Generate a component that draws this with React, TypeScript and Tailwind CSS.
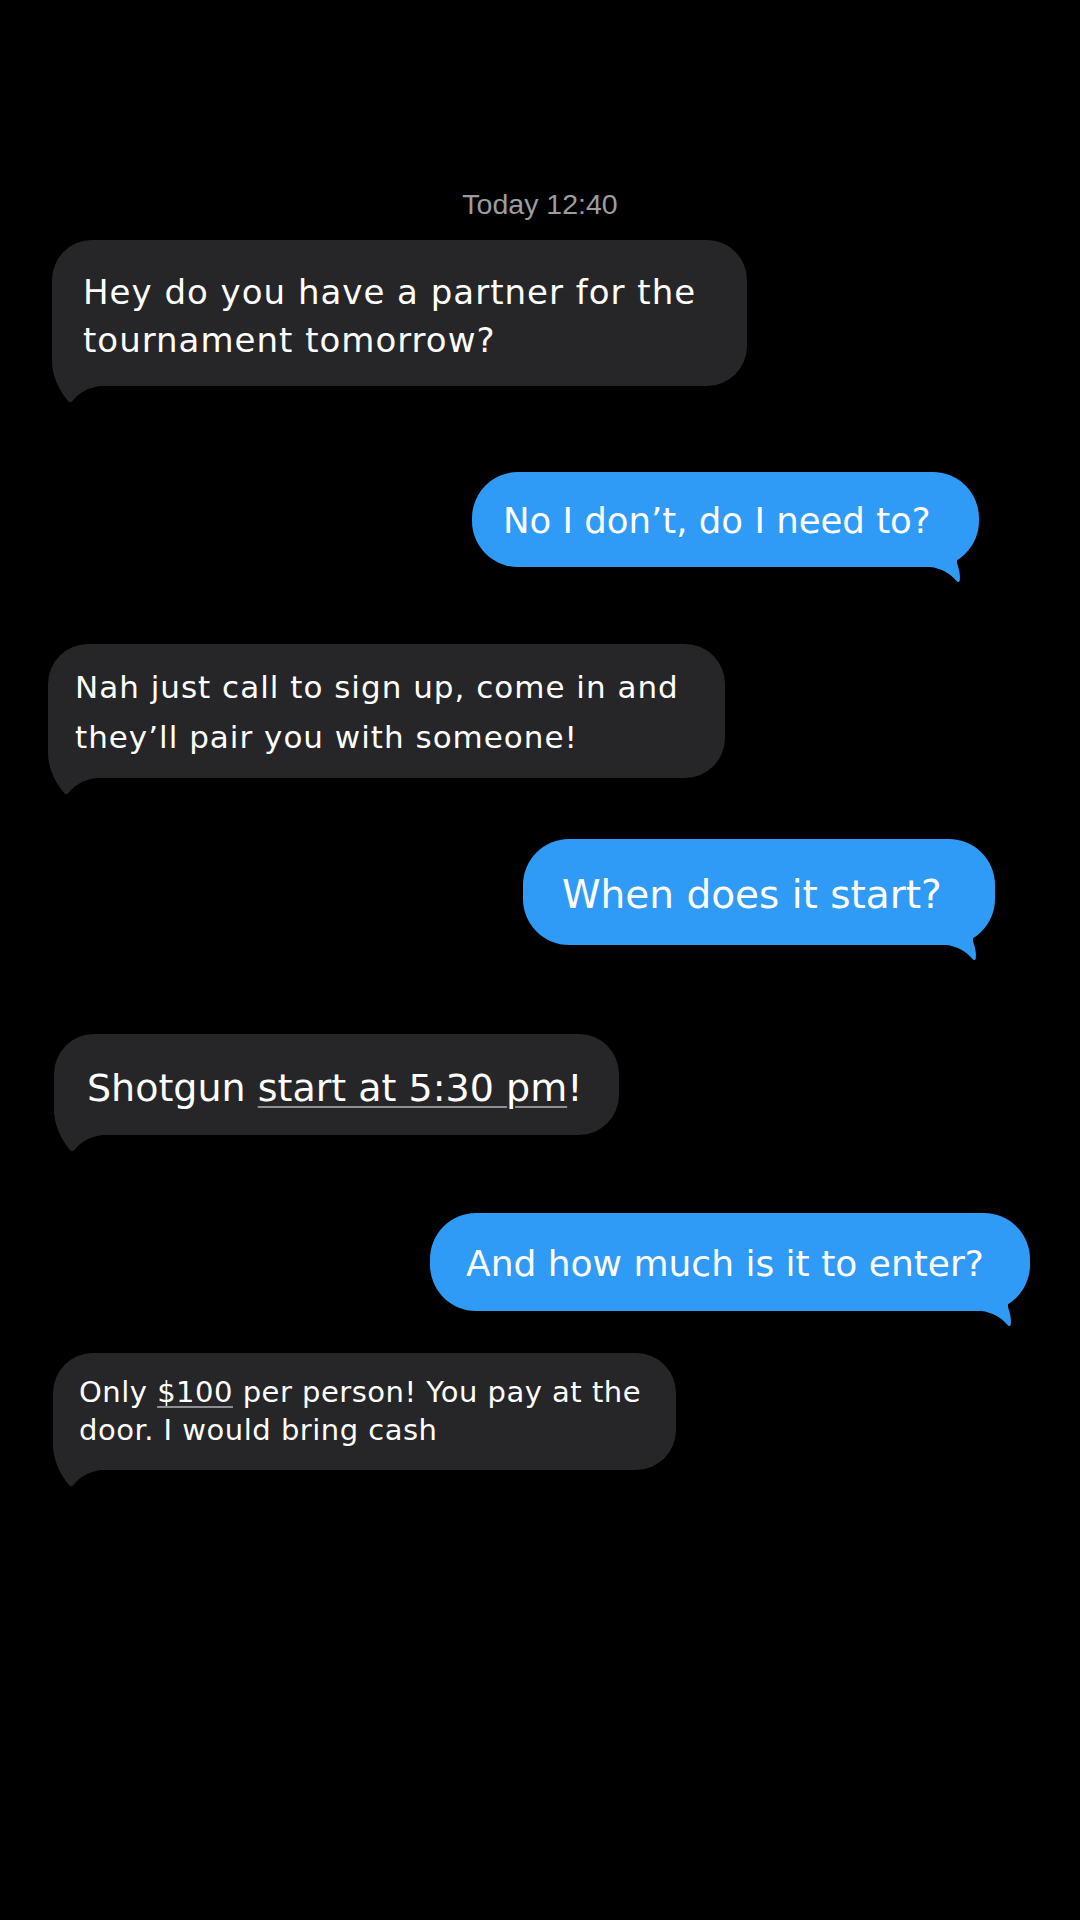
import React from "react";

function Received({ className, children }: { className: string; children: React.ReactNode }) {
  return (
    <div className={"relative self-start rounded-[40px] bg-[#262629] text-white " + className}>
      <svg className="absolute left-0 bottom-[-20px] h-[60px] w-[60px]" viewBox="0 0 60 60">
        <path
          d="M0 0 L0 15 C0 30 7 44 16 55 Q18 57.5 20.5 55 C26 48 34 42 48 40 L48 0 Z"
          fill="#262629"
        />
      </svg>
      <div className="relative whitespace-nowrap">{children}</div>
    </div>
  );
}

function Sent({ className, children }: { className: string; children: React.ReactNode }) {
  return (
    <div className={"relative self-end rounded-[46px] bg-[#309bf6] text-white " + className}>
      <svg className="absolute right-0 bottom-[-20px] h-[40px] w-[60px]" viewBox="0 0 60 40">
        <path
          d="M11 20 C22 21 32 27 37.5 34 Q39.5 36.5 40.8 33.5 C41.5 28 40 22 38 16 L38 0 L11 0 Z"
          fill="#309bf6"
        />
      </svg>
      <div className="relative whitespace-nowrap">{children}</div>
    </div>
  );
}

export default function App() {
  return (
    <div className="flex min-h-[1920px] w-full flex-col bg-black pt-[189px] font-['DejaVu_Sans',sans-serif]">
      <div className="text-center font-['Liberation_Sans',Arial,sans-serif] text-[28.5px] leading-[31px] text-[#9c9ca1]">
        Today 12:40
      </div>

      <Received className="mt-[20px] ml-[52px] w-[695px] pt-[28px] pb-[22px] pl-[31px] text-[34px] leading-[48px] tracking-[1px]">
        <div>Hey do you have a partner for the</div>
        <div>tournament tomorrow?</div>
      </Received>

      <Sent className="mt-[86px] mr-[101px] w-[507px] pt-[28px] pb-[25px] pl-[31px] text-[35.5px] leading-[42px]">
        <div>No I don’t, do I need to?</div>
      </Sent>

      <Received className="mt-[77px] ml-[48px] w-[677px] pt-[18px] pb-[16px] pl-[27px] text-[31px] leading-[50px] tracking-[1px]">
        <div>Nah just call to sign up, come in and</div>
        <div>they’ll pair you with someone!</div>
      </Received>

      <Sent className="mt-[61px] mr-[85px] w-[472px] pt-[33px] pb-[28px] pl-[39px] text-[39px] leading-[45px]">
        <div>When does it start?</div>
      </Sent>

      <Received className="mt-[89px] ml-[54px] w-[565px] pt-[32px] pb-[25px] pl-[33px] text-[38px] leading-[44px]">
        <div>
          Shotgun{" "}
          <span className="underline decoration-[#8e8e93] decoration-2 underline-offset-[5px]">
            start at 5:30 pm
          </span>
          !
        </div>
      </Received>

      <Sent className="mt-[78px] mr-[50px] w-[600px] pt-[30px] pb-[26px] pl-[36px] text-[36px] leading-[42px]">
        <div>And how much is it to enter?</div>
      </Sent>

      <Received className="mt-[42px] ml-[53px] w-[623px] pt-[20px] pb-[21px] pl-[26px] text-[29px] leading-[38px] tracking-[0.5px]">
        <div>
          Only{" "}
          <span className="underline decoration-[#8e8e93] decoration-2 underline-offset-[4px]">$100</span> per
          person! You pay at the
        </div>
        <div>door. I would bring cash</div>
      </Received>
    </div>
  );
}
